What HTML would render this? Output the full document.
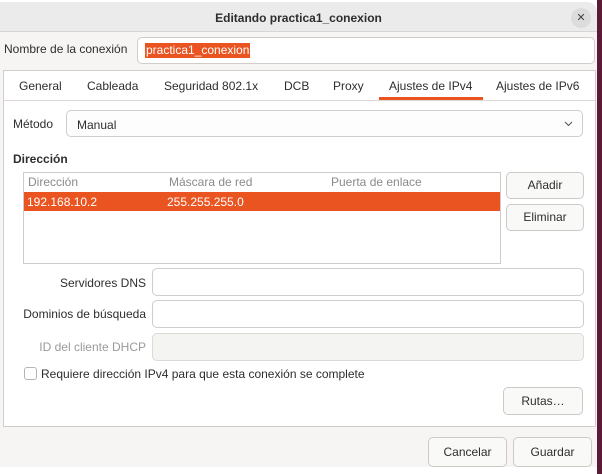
<!DOCTYPE html>
<html><head><meta charset="utf-8"><style>
*{box-sizing:border-box;margin:0;padding:0}
body{width:602px;height:474px;background:#fff;position:relative;overflow:hidden;font-family:"Liberation Sans","DejaVu Sans",sans-serif;font-size:12px;color:#2e2e2e}
.abs{position:absolute}
#strip{left:597px;top:0;width:5px;height:474px;background:#5c1a36}
#win{left:0;top:2px;width:597px;height:465px;background:#f6f5f4;border-top-right-radius:10px;overflow:hidden}
#title{left:0;top:0;width:597px;height:30px;background:#ebebeb;border-bottom:1px solid #d6d6d6;text-align:center;font-weight:bold;line-height:32px;font-size:12px}
#close{left:571px;top:6px;width:20px;height:20px;border-radius:50%;background:#dcdcdc;text-align:center;line-height:20px;font-size:11px;color:#444}
.entry{position:absolute;background:#fff;border:1px solid #d0cdca;border-radius:5px}
.btn{position:absolute;background:#f9f9f8;border:1px solid #cdc9c6;border-radius:5px;text-align:center}
.lbl{position:absolute;white-space:nowrap}
.r{text-align:right}
</style></head><body>
<div class="abs" id="strip"></div>
<div class="abs" id="win">
<div class="abs" id="title">Editando practica1_conexion</div>
<div class="abs" id="close">✕</div>
<div class="lbl" style="left:4px;top:40px">Nombre de la conexión</div>
<div class="entry" style="left:137px;top:35px;width:458px;height:27px"><span class="abs" style="left:7px;top:5px;background:#e95420;color:#fff;padding:0 1px;line-height:15px">practica1_conexion</span></div>
<div class="abs" style="left:3px;top:68px;width:593px;height:357px;border:1px solid #d0cdca;background:#fff"></div>
<div class="abs" style="left:4px;top:69px;width:591px;height:30px;border-bottom:1px solid #dcd9d6;background:#fff"></div>
<div class="lbl" style="left:19px;top:77px">General</div>
<div class="lbl" style="left:87px;top:77px">Cableada</div>
<div class="lbl" style="left:164px;top:77px">Seguridad 802.1x</div>
<div class="lbl" style="left:284px;top:77px">DCB</div>
<div class="lbl" style="left:333px;top:77px">Proxy</div>
<div class="lbl" style="left:389px;top:77px">Ajustes de IPv4</div>
<div class="lbl" style="left:496px;top:77px">Ajustes de IPv6</div>
<div class="abs" style="left:379px;top:95px;width:104px;height:3px;background:#e95420"></div>
<div class="lbl" style="left:13px;top:115px">Método</div>
<div class="entry" style="left:66px;top:108px;width:517px;height:27px;background:#fdfdfd"><span class="abs" style="left:10px;top:7px">Manual</span><svg class="abs" style="right:9px;top:10px" width="9" height="6" viewBox="0 0 9 6"><path d="M1 1 L4.5 4.5 L8 1" fill="none" stroke="#555" stroke-width="1.1"/></svg></div>
<div class="lbl" style="left:13px;top:150px;font-weight:bold">Dirección</div>
<div class="abs" style="left:23px;top:170px;width:478px;height:92px;border:1px solid #cfcbc8;background:#fff"></div>
<div class="lbl" style="left:28px;top:173px;color:#8a8a8a">Dirección</div>
<div class="lbl" style="left:169px;top:173px;color:#8a8a8a">Máscara de red</div>
<div class="lbl" style="left:331px;top:173px;color:#8a8a8a">Puerta de enlace</div>
<div class="abs" style="left:24px;top:190px;width:476px;height:19px;background:#e95420"></div>
<div class="lbl" style="left:27px;top:193px;color:#fff">192.168.10.2</div>
<div class="lbl" style="left:167px;top:193px;color:#fff">255.255.255.0</div>
<div class="btn" style="left:506px;top:170px;width:78px;height:27px;line-height:25px">Añadir</div>
<div class="btn" style="left:506px;top:202px;width:78px;height:27px;line-height:25px">Eliminar</div>
<div class="lbl r" style="left:0;width:146px;top:274px">Servidores DNS</div>
<div class="entry" style="left:152px;top:266px;width:432px;height:28px"></div>
<div class="lbl r" style="left:0;width:146px;top:305px">Dominios de búsqueda</div>
<div class="entry" style="left:152px;top:298px;width:432px;height:28px"></div>
<div class="lbl r" style="left:0;width:146px;top:338px;color:#9a9a9a">ID del cliente DHCP</div>
<div class="entry" style="left:152px;top:331px;width:432px;height:28px;background:#f4f4f3;border-color:#dcd9d6"></div>
<div class="abs" style="left:24px;top:365px;width:13px;height:13px;border:1px solid #b8b4b0;border-radius:3px;background:#fff"></div>
<div class="lbl" style="left:41px;top:365px">Requiere dirección IPv4 para que esta conexión se complete</div>
<div class="btn" style="left:503px;top:385px;width:80px;height:28px;line-height:26px">Rutas…</div>
<div class="btn" style="left:428px;top:435px;width:79px;height:30px;line-height:28px">Cancelar</div>
<div class="btn" style="left:513px;top:435px;width:79px;height:30px;line-height:28px">Guardar</div>
</div>
</body></html>
